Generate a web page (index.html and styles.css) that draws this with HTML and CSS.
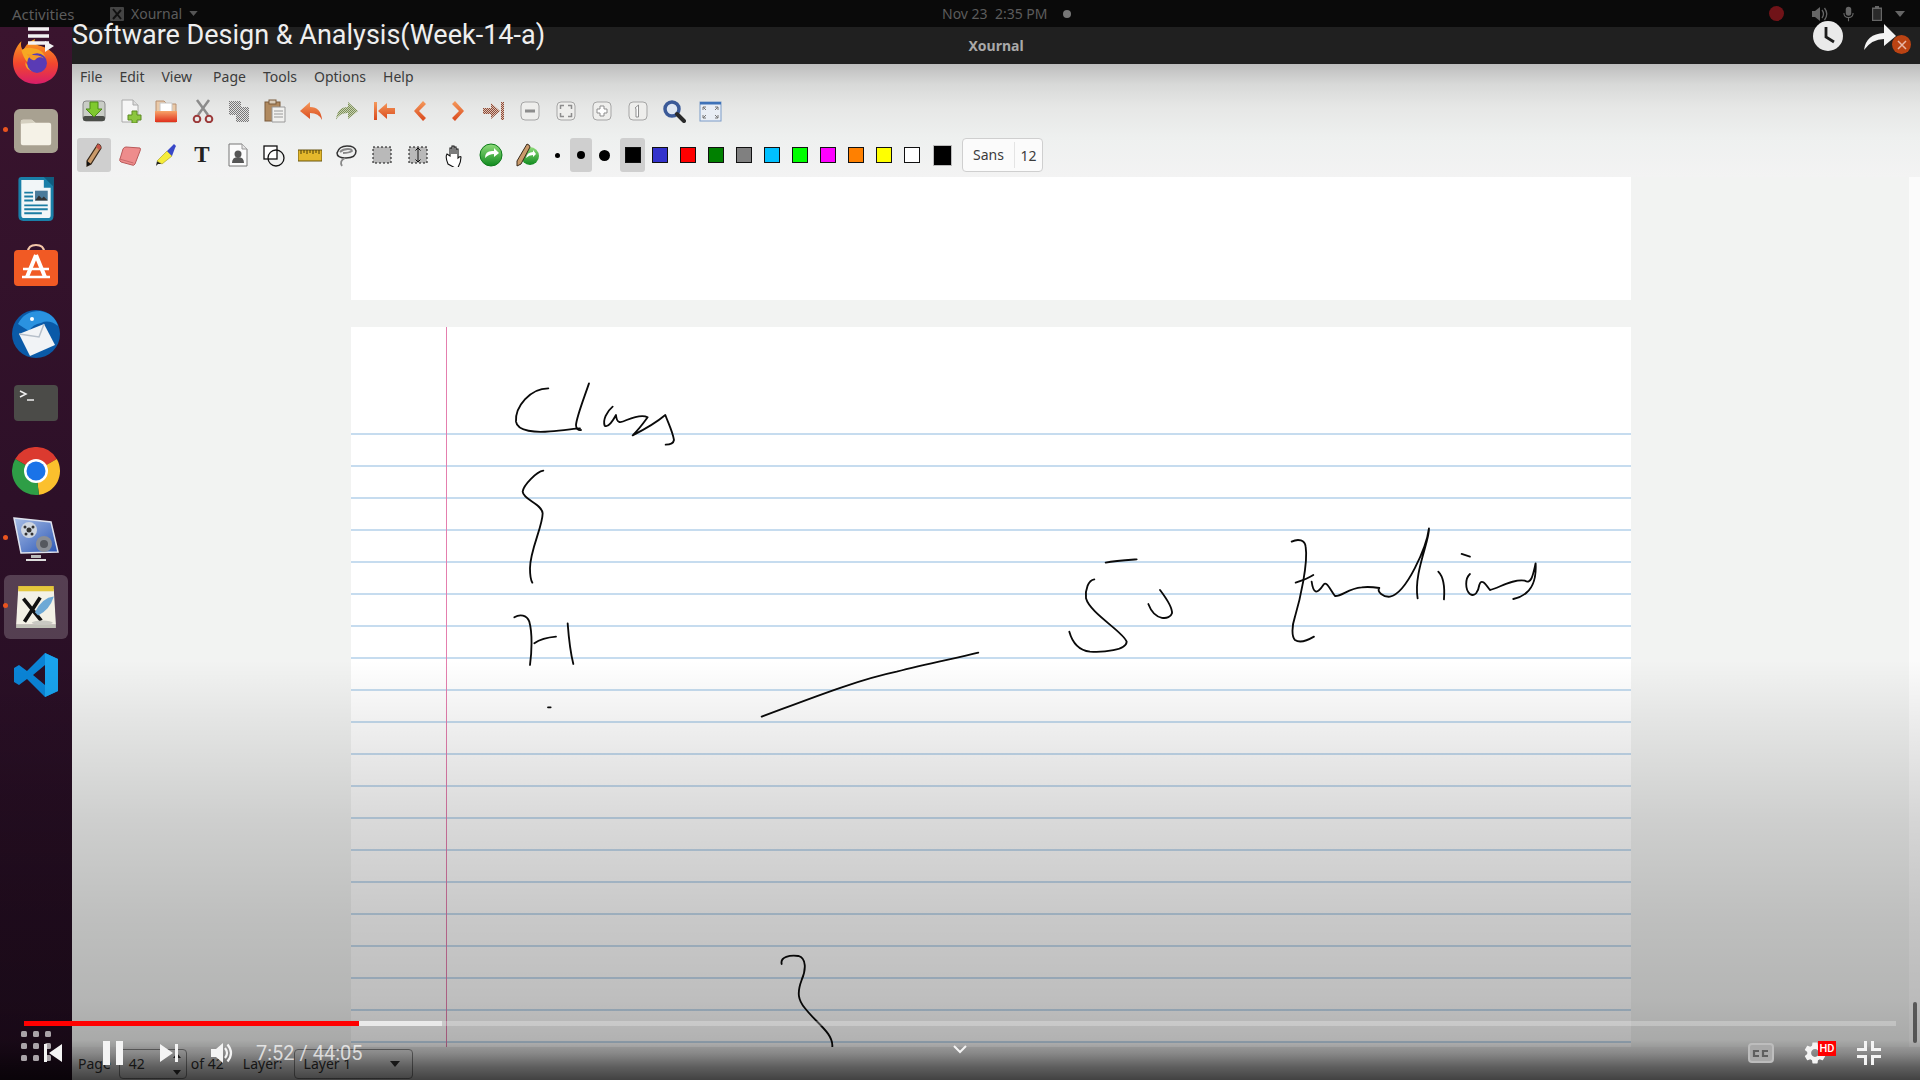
FILE: index.html
```html
<!DOCTYPE html>
<html lang="en">
<head>
<meta charset="utf-8">
<title>Xournal</title>
<link rel="stylesheet" href="styles.css">
</head>
<body>
<svg class="defs" aria-hidden="true">
  <defs>
    <pattern id="dith" width="2" height="2" patternUnits="userSpaceOnUse"><rect width="2" height="2" fill="#e2e2e2"/><rect width="1" height="1" fill="#777"/><rect x="1" y="1" width="1" height="1" fill="#777"/></pattern>
    <pattern id="dithr" width="2" height="2" patternUnits="userSpaceOnUse"><rect width="2" height="2" fill="#e0c3b2"/><rect width="1" height="1" fill="#8a4a3a"/><rect x="1" y="1" width="1" height="1" fill="#8a4a3a"/></pattern>
    <pattern id="dithg" width="2" height="2" patternUnits="userSpaceOnUse"><rect width="2" height="2" fill="#c9d3b0"/><rect width="1" height="1" fill="#7a8c5a"/><rect x="1" y="1" width="1" height="1" fill="#7a8c5a"/></pattern>
    <linearGradient id="org" x1="0" y1="0" x2="0" y2="1"><stop offset="0" stop-color="#f59a5c"/><stop offset="1" stop-color="#d9481c"/></linearGradient>
    <linearGradient id="fold" x1="0" y1="0" x2="0" y2="1"><stop offset="0" stop-color="#f7a56a"/><stop offset="1" stop-color="#e0301c"/></linearGradient>
    <linearGradient id="ffx" x1="0" y1="0" x2="0" y2="1"><stop offset="0" stop-color="#f9a31e"/><stop offset=".55" stop-color="#f2462e"/><stop offset="1" stop-color="#d81d6a"/></linearGradient>
    <linearGradient id="grn" x1="0" y1="0" x2="0" y2="1"><stop offset="0" stop-color="#8fdc7a"/><stop offset="1" stop-color="#0f8a1e"/></linearGradient>
    <linearGradient id="med" x1="0" y1="0" x2="1" y2="1"><stop offset="0" stop-color="#a9bfe6"/><stop offset="1" stop-color="#2a55b5"/></linearGradient>
  </defs>
</svg>

<div class="screen">
  <header class="topbar">
    <span class="activities">Activities</span>
    <span class="appname">
      <svg class="ico14" viewBox="0 0 14 14"><rect width="14" height="14" rx="1" fill="#444"/><path d="M3 2l8 10M11 3L3 12" stroke="#111" stroke-width="2"/></svg>
      Xournal
      <svg class="caret" viewBox="0 0 10 6"><path d="M0 0h10L5 6z" fill="#555"/></svg>
    </span>
    <span class="clock">Nov 23&nbsp;&nbsp;2:35 PM</span>
    <span class="rec-dim"></span>
    <span class="tray">
      <span class="rec"></span>
      <svg class="tray-i sp" viewBox="0 0 16 14"><path d="M0 4h3l5-4v14l-5-4H0z" fill="#666"/><path d="M10 3q3 4 0 8M12.500 1q4.500 6 0 12" fill="none" stroke="#666" stroke-width="1.300"/></svg>
      <svg class="tray-i mc" viewBox="0 0 12 16"><rect x="3" width="6" height="10" rx="3" fill="#666"/><path d="M1 7q0 5 5 5t5-5M6 12v4" fill="none" stroke="#666" stroke-width="1.200"/></svg>
      <svg class="tray-i bt" viewBox="0 0 10 15"><path d="M3 0h4v1.500h3V15H0V1.500h3z" fill="#666"/><rect x="1.200" y="3" width="7.600" height="10.800" fill="#2a2a2a"/></svg>
      <svg class="tray-i ar" viewBox="0 0 10 6"><path d="M0 0h10L5 6z" fill="#666"/></svg>
    </span>
  </header>

  <div class="desk">
    <nav class="dock">
      <div class="slot">
        <svg class="ic-ff" viewBox="0 0 44 44"><path d="M22 44C9 44 0 35 0 23 0 15 3 8 8 3c-1 4 0 7 2 9 2-5 6-9 11-11-1 3 0 5 3 6 9 2 18 8 19 17 1 12-9 20-21 20z" fill="url(#ffx)"/><path d="M8 12c3-3 8-3 12-2 7 1 11 5 11 11 0 7-5 11-10 11-6 0-10-4-9-9 1 3 4 5 7 4-4-2-8-5-11-15z" fill="#f7a823"/><circle cx="23" cy="24" r="9.500" fill="#5a3bb5"/><path d="M13 15c5 2 13 0 17 5-2-2-6-2-8 0-2 3-6 0-9-5z" fill="#f59a26"/></svg>
      </div>
      <div class="slot">
        <span class="run-dot"></span>
        <svg class="ic44" viewBox="0 0 45 45"><rect width="45" height="45" rx="6" fill="#a8a191"/><path d="M7 13q0-2 2-2h9l4 3h14q2 0 2 2v19q0 2-2 2H9q-2 0-2-2z" fill="#f5f2e7"/><path d="M7 13q0-2 2-2h9l4 3-15 1z" fill="#d5d0c0"/></svg>
      </div>
      <div class="slot">
        <svg class="ic44" viewBox="0 0 36 45"><path d="M3 0h33v39q0 6-5 6H5q-5 0-5-5V3q0-3 3-3z" fill="#1a7fa8"/><path d="M3 3h23v8h7v28q0 3-3 3H6q-3 0-3-3z" fill="#f2f6f8"/><path d="M26 0h10v10z" fill="#0f5d80"/><rect x="17" y="14" width="13" height="10" fill="#4a7a9a"/><path d="M17 24l4-5 3 3 2-2 4 4z" fill="#333"/><path d="M6 16h9M6 20h9M6 24h9M6 29h24M6 33h24M6 37h18" stroke="#1b7ca3" stroke-width="2"/></svg>
      </div>
      <div class="slot">
        <svg class="ic44 app" viewBox="0 0 44 42"><path d="M14 8Q14 1 22 1t8 7" fill="none" stroke="#f4c6a8" stroke-width="2"/><rect y="6" width="44" height="36" rx="4" fill="#f15a24"/><path d="M22 11l-9 22M22 11l9 22" stroke="#fff" stroke-width="4" fill="none"/><path d="M9 25h26M8 33h28" stroke="#fff" stroke-width="2.600"/></svg>
      </div>
      <div class="slot">
        <svg class="ic48 tb" viewBox="0 0 48 48"><circle cx="24" cy="24" r="24" fill="#0a5aa8"/><path d="M6 14Q12 1 28 1q14 2 18 15-9-7-17-3-8 1-12 8-5-3-11-7z" fill="#2a92e0"/><path d="M7 24l25-10 11 21-25 11z" fill="#f1f3f6"/><path d="M7 24l20 3 5-13" fill="none" stroke="#b6bfca" stroke-width="1.500"/><circle cx="20" cy="9" r="2" fill="#fff"/></svg>
      </div>
      <div class="slot">
        <svg class="ic44 term" viewBox="0 0 44 36"><rect width="44" height="36" rx="4" fill="#4b4b48"/><path d="M6 6l6 3-6 3" fill="none" stroke="#eee" stroke-width="1.500"/><path d="M13 15h7" stroke="#eee" stroke-width="1.500"/></svg>
      </div>
      <div class="slot">
        <svg class="ic48" viewBox="0 0 48 48"><path d="M24 24L3.200 12A24 24 0 0 1 44.800 12z" fill="#db3a2f"/><path d="M24 24L44.800 12A24 24 0 0 1 27 47.800z" fill="#fbc02d"/><path d="M24 24L27 47.800A24 24 0 0 1 3.200 12z" fill="#2e9e46"/><circle cx="24" cy="24" r="12" fill="#fff"/><circle cx="24" cy="24" r="9.500" fill="#1a73e8"/></svg>
      </div>
      <div class="slot">
        <span class="run-dot"></span>
        <svg class="ic48 medi" viewBox="0 0 46 45"><path d="M1 1l37 4 7 30-37 1z" fill="url(#med)" stroke="#dfe3ee" stroke-width="1.500"/><circle cx="16" cy="13" r="8" fill="#cfd6df"/><circle cx="16" cy="13" r="2.500" fill="#333"/><circle cx="12" cy="10" r="1.500" fill="#333"/><circle cx="20" cy="10" r="1.500" fill="#333"/><circle cx="13" cy="17" r="1.500" fill="#333"/><circle cx="19" cy="17" r="1.500" fill="#333"/><circle cx="31" cy="27" r="8" fill="#8b8f96"/><circle cx="31" cy="27" r="4" fill="#55585e"/><path d="M18 38h10v3H18z" fill="#bbb"/><path d="M13 42h20v2H13z" fill="#ddd"/></svg>
      </div>
      <div class="slot current">
        <span class="run-dot"></span>
        <svg class="ic44" viewBox="0 0 40 42"><path d="M3 4h34l2 34H1z" fill="#f3f1e6"/><rect x="3" y="1" width="34" height="5" fill="#e4c73c"/><path d="M1 38h38v3H1z" fill="#bfc0b6"/><path d="M8 13l17 21M24 12L9 35" stroke="#111" stroke-width="3.500"/><path d="M19 26Q26 12 37 11 33 24 22 29z" fill="#6da9d6"/><ellipse cx="26" cy="36" rx="10" ry="2" fill="#c9c9c2"/></svg>
      </div>
      <div class="slot">
        <svg class="ic44" viewBox="0 0 44 44"><path d="M31 0l13 6v32l-13 6L13 26l-8 6-5-3V15l5-3 8 6zM31 12L19 22l12 10z" fill="#0a84d6"/><path d="M31 0l13 6v32l-13 6z" fill="#19a3ee"/></svg>
      </div>
    </nav>

    <main class="window">
      <div class="titlebar">Xournal</div>
      <div class="chrome">
        <ul class="menubar">
          <li>File</li><li>Edit</li><li>View</li><li class="m-page">Page</li><li>Tools</li><li>Options</li><li>Help</li>
        </ul>
        <div class="toolrow">
          <span class="tool"><svg viewBox="0 0 24 24"><rect x="1" y="2" width="22" height="20" rx="3" fill="#c9cdc6" stroke="#888"/><rect x="1" y="17" width="22" height="5" rx="2" fill="#4a4d48"/><path d="M8 3h8v7h4l-8 8-8-8h4z" fill="#7fc92f" stroke="#4d8a18"/></svg></span>
          <span class="tool"><svg viewBox="0 0 24 24"><path d="M4 1h11l5 5v17H4z" fill="#f6f6f6" stroke="#aaa"/><path d="M15 1v5h5" fill="#ddd" stroke="#aaa"/><path d="M14 12h5v4h4v5h-4v3h-5v-3h-4v-5h4z" fill="#8cc63f" stroke="#5c8a22"/></svg></span>
          <span class="tool"><svg viewBox="0 0 24 24"><path d="M2 2h8l3 3h9v18H2z" fill="#e9c9a8" stroke="#b89070"/><path d="M6 4h12v9H6z" fill="#fff" stroke="#c8c8c8"/><path d="M1 12h22v11H1z" fill="url(#fold)"/></svg></span>
          <span class="tool sep"><svg viewBox="0 0 24 24"><path d="M6 1l11 15M18 1L7 16" stroke="#8c8c8c" stroke-width="2.500"/><circle cx="6" cy="20" r="3.300" fill="none" stroke="#9c3a3a" stroke-width="2"/><circle cx="18" cy="20" r="3.300" fill="none" stroke="#9c3a3a" stroke-width="2"/></svg></span>
          <span class="tool"><svg viewBox="0 0 24 24"><path d="M2 2h12v14H2z" fill="url(#dith)"/><path d="M9 8h13v15H9z" fill="url(#dith)"/></svg></span>
          <span class="tool"><svg viewBox="0 0 24 24"><rect x="2" y="3" width="15" height="19" fill="#b08a60" stroke="#7a5a3a"/><rect x="6" y="1" width="7" height="4" fill="#d8cbb8" stroke="#7a5a3a"/><path d="M9 8h13v15H9z" fill="#f1f1ef" stroke="#999"/><path d="M11 12h9M11 15h9M11 18h9" stroke="#999"/></svg></span>
          <span class="tool"><svg viewBox="0 0 24 24"><path d="M1 12L11 3v5q11 0 12 13-3-7-12-7v6z" fill="url(#org)"/></svg></span>
          <span class="tool"><svg viewBox="0 0 24 24"><path d="M23 12L13 3v5Q2 8 1 21q3-7 12-7v6z" fill="url(#dithg)"/></svg></span>
          <span class="tool sep"><svg viewBox="0 0 24 24"><path d="M2 3h3v18H2zM6 12l9-8v5h8v6h-8v5z" fill="url(#org)"/></svg></span>
          <span class="tool"><svg viewBox="0 0 24 24"><path d="M15 2l3 3-7 7 7 7-3 3L6 12z" fill="url(#org)"/></svg></span>
          <span class="tool sep2"><svg viewBox="0 0 24 24"><path d="M9 2L6 5l7 7-7 7 3 3 9-10z" fill="url(#org)"/></svg></span>
          <span class="tool"><svg viewBox="0 0 24 24"><path d="M22 3v18h-3V3zM18 12l-9-8v5H1v6h8v5z" fill="url(#dithr)"/></svg></span>
          <span class="tool"><svg viewBox="0 0 24 24"><rect x="3" y="3" width="18" height="18" rx="4" fill="#eeeeec" stroke="#a5a5a5"/><path d="M7 12h10" stroke="#8d8d8d" stroke-width="3"/></svg></span>
          <span class="tool"><svg viewBox="0 0 24 24"><rect x="3" y="3" width="18" height="18" rx="4" fill="#eeeeec" stroke="#a5a5a5"/><path d="M6.500 10V6.500H10M14 6.500h3.500V10M17.500 14v3.500H14M10 17.500H6.500V14" fill="none" stroke="#8d8d8d" stroke-width="1.500"/></svg></span>
          <span class="tool"><svg viewBox="0 0 24 24"><rect x="3" y="3" width="18" height="18" rx="4" fill="#eeeeec" stroke="#a5a5a5"/><path d="M10 7h4v3h3v4h-3v3h-4v-3H7v-4h3z" fill="#fff" stroke="#8d8d8d"/></svg></span>
          <span class="tool"><svg viewBox="0 0 24 24"><rect x="3" y="3" width="18" height="18" rx="4" fill="#eeeeec" stroke="#a5a5a5"/><path d="M9 9l3.500-3v12H10V9.500z" fill="#fff" stroke="#8d8d8d"/></svg></span>
          <span class="tool"><svg viewBox="0 0 24 24"><circle cx="10" cy="10" r="7" fill="#dfe7f2" stroke="#3b5a98" stroke-width="3.500"/><path d="M15 15l7 7" stroke="#2a2a2a" stroke-width="4" stroke-linecap="round"/></svg></span>
          <span class="tool"><svg viewBox="0 0 24 24"><rect x="2" y="3" width="21" height="19" fill="#e9eef5" stroke="#7b9cc8"/><rect x="2" y="3" width="21" height="2.500" fill="#3e72b8"/><path d="M5 8l3 3M5 8h3M5 8v3M20 8l-3 3M20 8h-3M20 8v3M5 19l3-3M5 19h3M5 19v-3M20 19l-3-3M20 19h-3M20 19v-3" stroke="#777" fill="none"/></svg></span>
        </div>
        <div class="toolrow second">
          <span class="tool on"><svg viewBox="0 0 24 24"><path d="M16 1q3 1 3 4L9 21l-4 2 0-5z" fill="#c99a6a" stroke="#3a2a1a" stroke-width="1.200"/><path d="M16 1q3 1 3 4l-2 2-3-3z" fill="#c8554a"/><path d="M5 23l0-5 4 3z" fill="#111"/></svg></span>
          <span class="tool"><svg viewBox="0 0 24 24"><path d="M8 4l14 1q1 1 0 3l-5 13q-1 2-3 1L3 19q-2-1-1-3l3-10q1-2 3-2z" fill="#ee8c8c" stroke="#b95a5a"/><path d="M1.500 16l14 4" stroke="#c96a6a"/></svg></span>
          <span class="tool"><svg viewBox="0 0 24 24"><path d="M4 21l-2 2 1-5 5 3z" fill="#222"/><path d="M3 18L13 8l5 5L8 21z" fill="#f5ec3a" stroke="#a39a1e" stroke-width=".6"/><path d="M13 8l7-7 2 2-1 2-3 8z" fill="#3848c8"/></svg></span>
          <span class="tool tt">T</span>
          <span class="tool"><svg viewBox="0 0 24 24"><path d="M3 1h13l5 5v17H3z" fill="#fbfbfb" stroke="#777"/><path d="M16 1v5h5" fill="#e6e6e6" stroke="#999"/><circle cx="12" cy="11" r="3.500" fill="#555"/><path d="M6 20q0-6 6-6t6 6z" fill="#555"/></svg></span>
          <span class="tool"><svg viewBox="0 0 24 24"><rect x="2" y="3" width="13" height="13" fill="#fff" stroke="#111" stroke-width="1.300"/><circle cx="14" cy="15" r="8" fill="none" stroke="#111" stroke-width="1.300"/></svg></span>
          <span class="tool"><svg viewBox="0 0 24 24"><rect y="7" width="24" height="11" fill="#e4b82c" stroke="#6a5610"/><path d="M3 7v4M6 7v3M9 7v4M12 7v3M15 7v4M18 7v3M21 7v4" stroke="#4a3c08"/></svg></span>
          <span class="tool"><svg viewBox="0 0 24 24"><path d="M3 10q2-7 10-7t9 5q0 7-10 7-9 0-9-5z" fill="none" stroke="#333" stroke-width="1.500"/><path d="M6 9q3-3 8-3 4 0 4 2-3 2-9 2M11 15q-6 3-3 8" fill="none" stroke="#888" stroke-width="1.800"/></svg></span>
          <span class="tool"><svg viewBox="0 0 24 24"><rect x="3" y="4" width="18" height="16" fill="#b9b9b9" stroke="#111" stroke-dasharray="2 2"/></svg></span>
          <span class="tool"><svg viewBox="0 0 24 24"><rect x="3" y="4" width="18" height="16" fill="#b9b9b9" stroke="#111" stroke-dasharray="2 2"/><path d="M12 5v14M9.500 7.500L12 5l2.500 2.500M9.500 16.500L12 19l2.500-2.500" fill="none" stroke="#111"/></svg></span>
          <span class="tool"><svg viewBox="0 0 24 24"><path d="M6 21Q3 14 5 11l3 2V5h2v6-8h2v8-7h2v7-5h2v9q2-2 3-1 0 6-4 12z" fill="#fff" stroke="#111" stroke-width="1.100"/></svg></span>
          <span class="tool sep"><svg viewBox="0 0 24 24"><circle cx="12" cy="12" r="11" fill="url(#grn)" stroke="#0d7a1a"/><path d="M6 15q0-8 9-7V5l5 5-5 4v-3q-5 0-9 4zM18 10" fill="#fff"/></svg></span>
          <span class="tool"><svg viewBox="0 0 24 24"><circle cx="15" cy="13" r="9" fill="url(#grn)"/><path d="M11 15q1-6 7-6V7l3 4-3 3v-2q-4 0-7 3z" fill="#fff"/><path d="M12 1q3 1 3 3L6 21l-4 2 0-5z" fill="#c99a6a" stroke="#3a2a1a"/></svg></span>
          <span class="dot-btn first"><i class="d1"></i></span>
          <span class="dot-btn on"><i class="d2"></i></span>
          <span class="dot-btn"><i class="d3"></i></span>
          <span class="col-on"><i class="swatch blk"></i></span>
          <i class="swatch c2"></i><i class="swatch c3"></i><i class="swatch c4"></i><i class="swatch c5"></i><i class="swatch c6"></i><i class="swatch c7"></i><i class="swatch c8"></i><i class="swatch c9"></i><i class="swatch c10"></i><i class="swatch c11"></i>
          <i class="cur-col"></i>
          <span class="fontbtn"><b>Sans</b><em>12</em></span>
        </div>
      </div>

      <div class="canvas">
        <div class="pages">
          <div class="page top-page"></div>
          <div class="page ruled">
            <div class="rules"></div>
            <span class="margin-line"></span>
            <svg class="ink" viewBox="351 327 1280 720">
              <g transform="translate(480 360) scale(.3333)" class="stroke">
                <path d="M205 85C150 85 105 140 108 185 112 215 170 218 210 214 250 212 285 205 300 205"/>
                <path d="M327 70C310 120 290 170 288 195 288 205 295 212 303 210"/>
                <path d="M398 140C380 155 368 180 374 197 385 205 400 180 408 165 410 190 420 190 440 180 465 170 490 165 503 172 490 190 470 215 458 226 480 215 520 195 556 165 565 190 578 215 582 240 580 252 568 254 557 254"/>
                <path d="M190 332C170 335 130 375 128 395 130 420 185 430 188 460 188 500 150 570 150 625 150 645 152 660 157 668"/>
                <path d="M103 772C120 762 140 765 148 785 158 820 155 880 150 915"/>
                <path d="M163 850C180 838 205 832 228 830"/>
                <path d="M263 790C266 830 272 880 280 912"/>
                <path d="M204 1042h8"/>
              </g>
              <g transform="translate(1040 510) scale(.3333)" class="stroke">
                <path d="M197 158C225 152 260 150 290 148"/>
                <path d="M163 208C145 210 135 240 138 265 150 310 250 365 260 395 260 420 190 428 150 425 110 420 95 390 88 365"/>
                <path d="M360 240C375 260 398 290 396 310 390 330 345 335 325 282"/>
                <path d="M755 95C775 85 795 90 797 110 805 160 780 270 765 320 755 350 755 380 765 390 780 400 805 390 822 380"/>
                <path d="M767 218C785 212 805 205 820 195"/>
                <path d="M815 215C820 250 830 255 850 225 860 210 870 240 885 258 905 260 925 235 965 232 985 230 1005 232 1018 234 1010 245 1030 262 1050 260 1100 250 1160 110 1167 55 1170 90 1120 190 1133 265"/>
                <path d="M1195 185C1210 200 1215 230 1212 268"/>
                <path d="M1265 132L1290 140"/>
                <path d="M1290 192C1275 205 1275 240 1290 252 1305 262 1315 245 1318 225 1325 205 1335 220 1350 240 1375 235 1420 205 1455 212 1475 225 1480 190 1487 160 1490 215 1475 255 1420 267"/>
              </g>
              <g transform="translate(740 640) scale(.3333)" class="stroke">
                <path d="M65 230C200 180 350 120 470 95 560 70 650 55 715 38"/>
                <path d="M125 972C120 950 150 945 175 948 200 955 198 990 185 1020 170 1060 175 1080 195 1105 230 1150 280 1180 277 1220"/>
              </g>
            </svg>
          </div>
        </div>
        <div class="scrollstrip"><span class="thumb"></span></div>
      </div>

      <footer class="statusbar">
        <span>Page</span>
        <span class="spin"><span>42</span>
          <svg class="spin-a" viewBox="0 0 10 26"><path d="M5 2l4 5H1zM1 19h8l-4 5z" fill="#333"/></svg>
        </span>
        <span>of 42</span>
        <span class="layer-l">Layer:</span>
        <span class="combo"><span>Layer 1</span><svg class="combo-a" viewBox="0 0 10 6"><path d="M0 0h10L5 6z" fill="#333"/></svg></span>
      </footer>
    </main>
  </div>

  <div class="scrim"></div>

  <h1 class="video-title">Software Design &amp; Analysis(Week-14-a)</h1>

  <div class="burger">
    <svg viewBox="0 0 28 26"><path d="M1 2h21M1 9h21M1 16h21" stroke="#f2f2f2" stroke-width="3.600"/><path d="M18 14l9 5-9 6z" fill="#f2f2f2"/></svg>
  </div>

  <div class="yt-top">
    <span class="yt-clock"><svg viewBox="0 0 30 30"><circle cx="15" cy="15" r="15" fill="#eaeaea"/><path d="M13 6v10l8 5" fill="none" stroke="#1d1d1d" stroke-width="2.800"/></svg></span>
    <span class="yt-share">
      <svg viewBox="0 0 34 28"><path d="M0 26Q2 10 20 9V0l12 12-12 10v-7Q8 15 0 26z" fill="#f4f4f4"/></svg>
      <span class="yt-close"><svg viewBox="0 0 10 10"><path d="M1 1l8 8M9 1l-8 8" stroke="#e8b8a8" stroke-width="1.500"/></svg></span>
    </span>
  </div>

  <div class="apps-grid"><i></i><i></i><i></i><i></i><i></i><i></i><i></i><i></i><i></i></div>

  <div class="player">
    <div class="progress"><span class="played"></span><span class="buffered"></span></div>
    <div class="controls">
      <svg class="prev" viewBox="0 0 18 18"><path d="M0 0h3v18H0zM18 0v18L5 9z" fill="#f4f4f4"/></svg>
      <svg class="pause" viewBox="0 0 20 24"><path d="M0 0h7v24H0zM13 0h7v24h-7z" fill="#f4f4f4"/></svg>
      <svg class="next" viewBox="0 0 18 18"><path d="M0 0l13 9-13 9zM15 0h3v18h-3z" fill="#f4f4f4"/></svg>
      <svg class="vol" viewBox="0 0 22 22"><path d="M0 7h5l7-6v20l-7-6H0z" fill="#f4f4f4"/><path d="M14 6q4 5 0 10M16.500 2.500q7 8.500 0 17" fill="none" stroke="#f4f4f4" stroke-width="2.200"/></svg>
      <span class="time">7:52 / 44:05</span>
      <span class="ctl-chevron"><svg viewBox="0 0 14 9"><path d="M1 1l6 6 6-6" fill="none" stroke="#f4f4f4" stroke-width="2"/></svg></span>
      <svg class="cc" viewBox="0 0 26 20"><rect x="1" y="1" width="24" height="18" rx="3" fill="#a9a9a9" stroke="#bdbdbd" stroke-width="2"/><path d="M11 8H6v5h5M20 8h-5v5h5" fill="none" stroke="#5f5f5f" stroke-width="2.200"/></svg>
      <span class="gear">
        <svg viewBox="0 0 24 24"><path fill="#f4f4f4" d="M19.140 12.940c.04-.3.06-.61.06-.94 0-.32-.02-.64-.07-.94l2.030-1.580a.49.49 0 0 0 .12-.61l-1.920-3.320a.488.488 0 0 0-.59-.22l-2.390.96c-.5-.38-1.030-.7-1.620-.94l-.36-2.540a.484.484 0 0 0-.48-.41h-3.840c-.24 0-.43.17-.47.41l-.36 2.540c-.59.24-1.130.57-1.620.94l-2.390-.96c-.22-.08-.47 0-.59.22L2.740 8.870c-.12.21-.08.47.12.61l2.030 1.580c-.05.3-.09.63-.09.94s.02.64.07.94l-2.030 1.580a.49.49 0 0 0-.12.61l1.920 3.320c.12.22.37.29.59.22l2.390-.96c.5.38 1.030.7 1.620.94l.36 2.540c.05.24.24.41.48.41h3.840c.24 0 .44-.17.47-.41l.36-2.540c.59-.24 1.130-.56 1.620-.94l2.390.96c.22.08.47 0 .59-.22l1.920-3.320c.12-.22.07-.47-.12-.61l-2.010-1.580zM12 15.600c-1.980 0-3.600-1.620-3.600-3.600s1.620-3.600 3.600-3.600 3.600 1.620 3.600 3.600-1.620 3.600-3.600 3.600z"/></svg>
        <span class="hd">HD</span>
      </span>
      <svg class="fs" viewBox="0 0 24 24"><path d="M7 0h3v10H0V7h7zM17 0h-3v10h10V7h-7zM7 24h3V14H0v3h7zM17 24h-3V14h10v3h-7z" fill="#f4f4f4"/></svg>
    </div>
  </div>
</div>
</body>
</html>
```
FILE: styles.css
```css
* { box-sizing: border-box; }
html, body { margin: 0; padding: 0; background: #000; }
.defs { position: absolute; width: 0; height: 0; }
.screen {
  position: relative; width: 1920px; height: 1080px; overflow: hidden;
  display: flex; flex-direction: column;
  font-family: "Noto Sans", "DejaVu Sans", sans-serif;
}

/* top bar */
.topbar {
  height: 27px; flex: none; background: #0a0a0a; color: #5c5c5c;
  display: flex; align-items: center; font-size: 14px; padding-left: 12px;
}
.activities { width: 98px; font-size: 15px; }
.appname { display: flex; align-items: center; gap: 7px; width: 832px; }
.ico14 { width: 14px; height: 14px; }
.caret { width: 9px; height: 5px; }
.clock { width: 118px; font-size: 14px; white-space: nowrap; }
.rec-dim { width: 8px; height: 8px; border-radius: 50%; background: #777; margin-left: 3px; }
.tray { margin-left: auto; display: flex; align-items: center; }
.rec { width: 15px; height: 15px; border-radius: 50%; background: #701318; margin-right: 28px; }
.tray-i { display: block; }
.sp { width: 16px; height: 14px; margin-right: 15px; }
.mc { width: 11px; height: 16px; margin-right: 18px; }
.bt { width: 10px; height: 15px; margin-right: 13px; }
.ar { width: 10px; height: 6px; margin-right: 15px; }

.desk { flex: 1; min-height: 0; display: flex; }

/* dock */
.dock {
  width: 72px; flex: none; padding-top: 2px;
  background: linear-gradient(#3a142e, #2d1028 45%, #220d20 100%);
  display: grid; grid-auto-rows: 68px; justify-items: center; align-content: start;
}
.slot { position: relative; width: 64px; height: 64px; margin-top: 2px; display: flex; align-items: center; justify-content: center; border-radius: 6px; }
.current { background: rgba(255,255,255,.2); }
.run-dot { position: absolute; left: -1px; top: 28px; width: 5px; height: 5px; border-radius: 50%; background: #e9541f; }
.ic44 { width: 44px; height: 44px; display: block; }
.ic48 { width: 48px; height: 48px; display: block; }
.ic-ff { width: 46px; height: 48px; display: block; margin-top: -4px; }
.term { height: 36px; }
.app { height: 42px; margin-top: -4px; }
.tb { margin-top: -2px; }
.medi { width: 46px; height: 45px; }

/* window */
.window { flex: 1; min-width: 0; display: flex; flex-direction: column; }
.titlebar {
  height: 37px; flex: none; background: #202020; color: #a9a9a9;
  display: flex; align-items: center; justify-content: center;
  font-size: 14px; font-weight: 700; padding-top: 0;
}
.chrome {
  flex: none; height: 113px;
  background: linear-gradient(#bdbdbd 0, #d8d9d8 18%, #e6e7e6 38%, #eef0ef 65%, #f3f3f3 100%);
}
.menubar { list-style: none; margin: 0; padding: 0 0 0 8px; height: 25px; display: flex; align-items: center; gap: 17px; font-size: 14px; color: #3c3c3c; }
.m-page { margin-left: 4px; }
.toolrow { height: 44px; display: flex; align-items: center; padding-left: 4px; }
.toolrow.second { height: 44px; }
.tool { width: 36px; height: 34px; flex: none; display: flex; align-items: center; justify-content: center; border-radius: 3px; }
.tool svg { width: 24px; height: 24px; display: block; }
.tool.on { background: #cfcfcf; width: 34px; margin: 0 1px; }
.sep { margin-left: 1px; }
.sep2 { margin-left: 2px; }
.tt { font-family: "Liberation Serif", serif; font-weight: 700; font-size: 23px; color: #222; }
.dot-btn { width: 23px; height: 34px; flex: none; display: flex; align-items: center; justify-content: center; border-radius: 3px; }
.dot-btn.first { margin-left: 1px; }
.dot-btn.on { background: #cfcfcf; margin: 0 1px; width: 22px; }
.dot-btn i { display: block; border-radius: 50%; background: #000; }
.d1 { width: 5px; height: 5px; }
.d2 { width: 8px; height: 8px; }
.d3 { width: 11px; height: 11px; }
.col-on { width: 25px; height: 34px; flex: none; margin-left: 4px; background: #cfcfcf; border-radius: 3px; display: flex; align-items: center; justify-content: center; }
.swatch { display: block; width: 16px; height: 16px; flex: none; border: 1px solid #111; margin-left: 12px; }
.col-on .swatch { margin: 0; }
.blk { background: #000; }
.c2 { background: #3333cc; margin-left: 7px; }
.c3 { background: #f00; }
.c4 { background: #008000; }
.c5 { background: #808080; }
.c6 { background: #00c0ff; }
.c7 { background: #0f0; }
.c8 { background: #f0f; }
.c9 { background: #ff8000; }
.c10 { background: #ff0; }
.c11 { background: #fff; }
.cur-col { display: block; width: 19px; height: 21px; flex: none; background: #000; border: 1px solid #bbb; margin-left: 13px; }
.fontbtn { display: flex; align-items: center; margin-left: 10px; width: 81px; height: 34px; flex: none; border: 1px solid #cfcfcf; border-radius: 4px; background: #fbfbfb; color: #3c3c3c; font-size: 14px; }
.fontbtn b { font-weight: 400; width: 52px; text-align: center; border-right: 1px solid #e4e4e4; line-height: 26px; }
.fontbtn em { font-style: normal; flex: 1; text-align: center; }

/* canvas */
.canvas { flex: 1; min-height: 0; display: flex; background: #f2f3f2; }
.pages { flex: 1; min-width: 0; display: flex; flex-direction: column; align-items: center; overflow: hidden; gap: 27px; }
.page { width: 1280px; background: #fff; flex: none; }
.top-page { height: 123px; }
.ruled { position: relative; height: 720px; padding-top: 106px; }
.rules {
  height: 611px;
  background-image: linear-gradient(#c6dcef 2px, transparent 2px);
  background-size: 100% 32px;
}
.margin-line { position: absolute; left: 95px; top: 0; bottom: 0; width: 1px; background: #e47fae; }
.ink { position: absolute; inset: 0; width: 1280px; height: 720px; display: block; }
.stroke path { fill: none; stroke: #0a0a0a; stroke-width: 5.500; stroke-linecap: round; stroke-linejoin: round; }
.scrollstrip { width: 11px; flex: none; background: #fbfbfb; position: relative; }
.thumb { position: absolute; left: 4px; top: 825px; width: 4px; height: 41px; border-radius: 2px; background: #777; }

/* status bar */
.statusbar { height: 33px; flex: none; background: #ececec; display: flex; align-items: center; padding-left: 6px; font-size: 14px; color: #333; }
.spin { width: 68px; height: 30px; margin-left: 8px; margin-right: 4px; border: 1px solid #8a8a8a; border-radius: 4px; display: flex; align-items: center; justify-content: space-between; padding: 0 4px 0 9px; }
.spin-a { width: 10px; height: 26px; }
.layer-l { margin-left: 19px; }
.combo { width: 119px; height: 30px; margin-left: 11px; border: 1px solid #8a8a8a; border-radius: 4px; display: flex; align-items: center; justify-content: space-between; padding: 0 12px 0 9px; }
.combo-a { width: 10px; height: 6px; }

/* overlays */
.scrim {
  position: absolute; left: 0; right: 0; bottom: 0; height: 420px; pointer-events: none;
  background: linear-gradient(rgba(0,0,0,0) 0, rgba(0,0,0,.02) 20px, rgba(0,0,0,.06) 60px, rgba(0,0,0,.15) 160px, rgba(0,0,0,.215) 260px, rgba(0,0,0,.255) 340px, rgba(0,0,0,.3) 380px, rgba(0,0,0,.42) 393px, rgba(0,0,0,.6) 407px, rgba(0,0,0,.72) 420px);
}
.video-title {
  position: absolute; left: 72px; top: 16px; margin: 0;
  font: 400 27px/38px Roboto, sans-serif; color: #efefef; white-space: nowrap;
}
.burger { position: absolute; left: 27px; top: 27px; width: 28px; height: 26px; }
.burger svg { width: 28px; height: 26px; display: block; }
.yt-top { position: absolute; left: 1813px; top: 21px; display: flex; }
.yt-clock { width: 30px; height: 30px; }
.yt-clock svg { width: 30px; height: 30px; display: block; }
.yt-share { position: relative; width: 34px; height: 28px; margin-left: 21px; margin-top: 3px; }
.yt-share svg { display: block; width: 34px; height: 28px; }
.yt-close { position: absolute; left: 28px; top: 11px; width: 19px; height: 19px; border-radius: 50%; background: #bb4313; display: flex; align-items: center; justify-content: center; }
.yt-close svg { width: 10px; height: 10px; }
.apps-grid { position: absolute; left: 21px; top: 1031px; display: grid; grid-template-columns: repeat(3, 6px); grid-auto-rows: 6px; gap: 6px; }
.apps-grid i { background: #a9a3a8; border-radius: 1.500px; display: block; }

.player { position: absolute; left: 0; right: 0; top: 1021px; }
.progress { position: relative; margin: 0 24px; height: 5px; background: rgba(255,255,255,.25); }
.played { position: absolute; left: 0; top: 0; bottom: 0; width: 335px; background: #f00; }
.buffered { position: absolute; left: 335px; top: 0; bottom: 0; width: 83px; background: rgba(255,255,255,.6); }
.controls { position: relative; height: 24px; margin-top: 15px; padding-left: 44px; display: flex; align-items: center; }
.controls svg { display: block; flex: none; }
.prev { width: 18px; height: 18px; }
.pause { width: 20px; height: 24px; margin-left: 41px; }
.next { width: 18px; height: 18px; margin-left: 37px; }
.vol { width: 22px; height: 22px; margin-left: 33px; }
.time { margin-left: 23px; font: 400 20px/24px Roboto, sans-serif; color: rgba(255,255,255,.72); white-space: nowrap; }
.ctl-chevron { position: absolute; left: 953px; top: 4px; }
.ctl-chevron svg { width: 14px; height: 9px; }
.cc { width: 26px; height: 20px; margin-left: auto; }
.gear { position: relative; width: 24px; height: 24px; margin-left: 29px; }
.gear svg { width: 26px; height: 26px; margin: -1px; }
.hd { position: absolute; left: 15px; top: 0; width: 18px; height: 15px; background: #f00; color: #fff; font: 500 11px/15px Roboto, sans-serif; text-align: center; }
.fs { width: 24px; height: 24px; margin-left: 30px; margin-right: 39px; }
```
